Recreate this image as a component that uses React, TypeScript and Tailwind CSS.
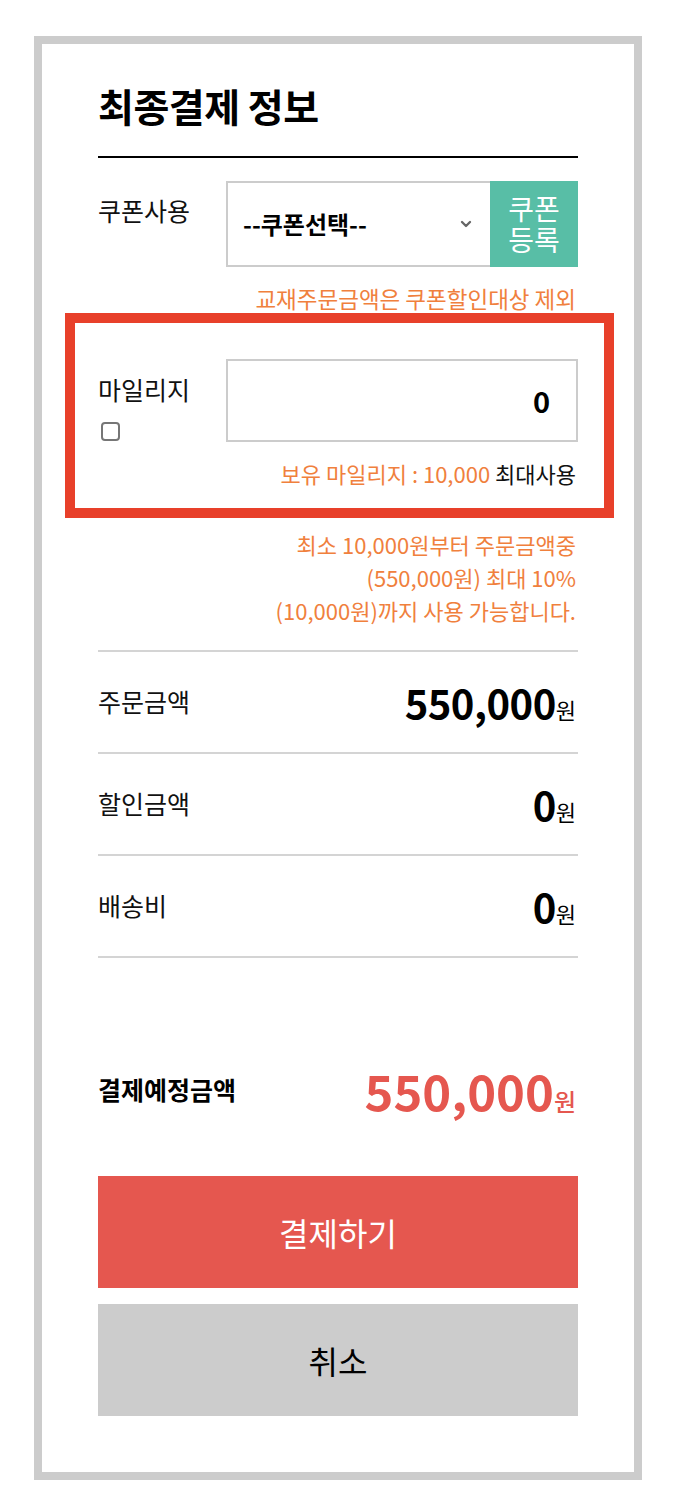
import { ChevronDown } from 'lucide-react';

type PriceRow = {
  label: string;
  amount: string;
};

const rows: PriceRow[] = [
  { label: '주문금액', amount: '550,000' },
  { label: '할인금액', amount: '0' },
  { label: '배송비', amount: '0' },
];

const font = 'font-["Noto_Sans_CJK_KR","Noto_Sans",sans-serif]';

export default function App() {
  return (
    <div className={`min-h-[1494px] bg-white pt-[36px] pl-[34px] ${font}`}>
      <div className="w-[608px] border-8 border-[#cccccc] px-[56px] pt-[39px] pb-[56px]">
        {/* title */}
        <h1 className="text-[39px] leading-[44px] font-bold text-black tracking-[-0.5px] pb-[29px] border-b-2 border-black">
          최종결제 정보
        </h1>

        {/* coupon */}
        <div className="mt-[23px] flex">
          <div className="w-[128px] pt-[12px] text-[25px] leading-[34px] text-[#111]">쿠폰사용</div>
          <div className="flex-1 flex h-[86px]">
            <div className="flex-1 flex items-center justify-between border-2 border-r-0 border-[#cccccc] pl-[15px] pr-[16px]">
              <span className="text-[24px] font-bold text-black">--쿠폰선택--</span>
              <ChevronDown size={16} strokeWidth={3.5} className="text-[#666]" />
            </div>
            <button className="w-[88px] bg-[#58bea6] text-white text-[28px] leading-[31px] text-center">
              쿠폰
              <br />
              등록
            </button>
          </div>
        </div>
        <p className="mt-[16px] text-right pr-[2px] text-[22.5px] leading-[30px] text-[#f0803d]">
          교재주문금액은 쿠폰할인대상 제외
        </p>

        {/* mileage (highlighted) */}
        <div className="ml-[-33px] mr-[-36px] border-[10px] border-[#e8402a] pl-[23px] pr-[26px] pt-[36px] pb-[20px]">
          <div className="flex">
            <div className="w-[128px] flex flex-col">
              <span className="text-[25px] leading-[34px] text-[#111] pt-[13px]">마일리지</span>
              <span className="mt-[16px] ml-[3px] w-[19px] h-[19px] border-2 border-[#767676] rounded-[4px] bg-white" />
            </div>
            <div className="flex-1 h-[83px] border-2 border-[#cccccc] flex items-center justify-end pr-[26px]">
              <span className="text-[29px] font-bold text-black">0</span>
            </div>
          </div>
          <p className="mt-[16px] text-right pr-[2px] text-[22px] leading-[30px] text-[#f0803d]">
            보유 마일리지 : 10,000 <span className="text-[#111]">최대사용</span>
          </p>
        </div>

        <div className="mt-[10px] pr-[2px] text-right text-[22px] leading-[33px] text-[#f0803d]">
          <p>최소 10,000원부터 주문금액중</p>
          <p>(550,000원) 최대 10%</p>
          <p>(10,000원)까지 사용 가능합니다.</p>
        </div>

        {/* price rows */}
        <div className="mt-[23px] border-t-2 border-[#d4d4d4]">
          {rows.map((row) => (
            <div
              key={row.label}
              className="h-[102px] border-b-2 border-[#d4d4d4] flex items-center justify-between"
            >
              <span className="text-[25px] text-[#111]">{row.label}</span>
              <span className="flex items-baseline text-black pr-[2px]">
                <span className="text-[40px] font-bold tracking-[-0.5px]">{row.amount}</span>
                <span className="text-[22px]">원</span>
              </span>
            </div>
          ))}
        </div>

        {/* total */}
        <div className="mt-[102px] h-[60px] flex items-center justify-between">
          <span className="text-[25px] font-bold text-black">결제예정금액</span>
          <span className="flex items-baseline text-[#e5574f] pr-[2px]">
            <span className="text-[49px] font-bold leading-[60px]">550,000</span>
            <span className="text-[24px] font-medium">원</span>
          </span>
        </div>

        {/* actions */}
        <button className="mt-[56px] w-full h-[112px] bg-[#e5574f] text-white text-[32px] flex items-center justify-center">
          결제하기
        </button>
        <button className="mt-[16px] w-full h-[112px] bg-[#cccccc] text-black text-[32px] flex items-center justify-center">
          취소
        </button>
      </div>
    </div>
  );
}
